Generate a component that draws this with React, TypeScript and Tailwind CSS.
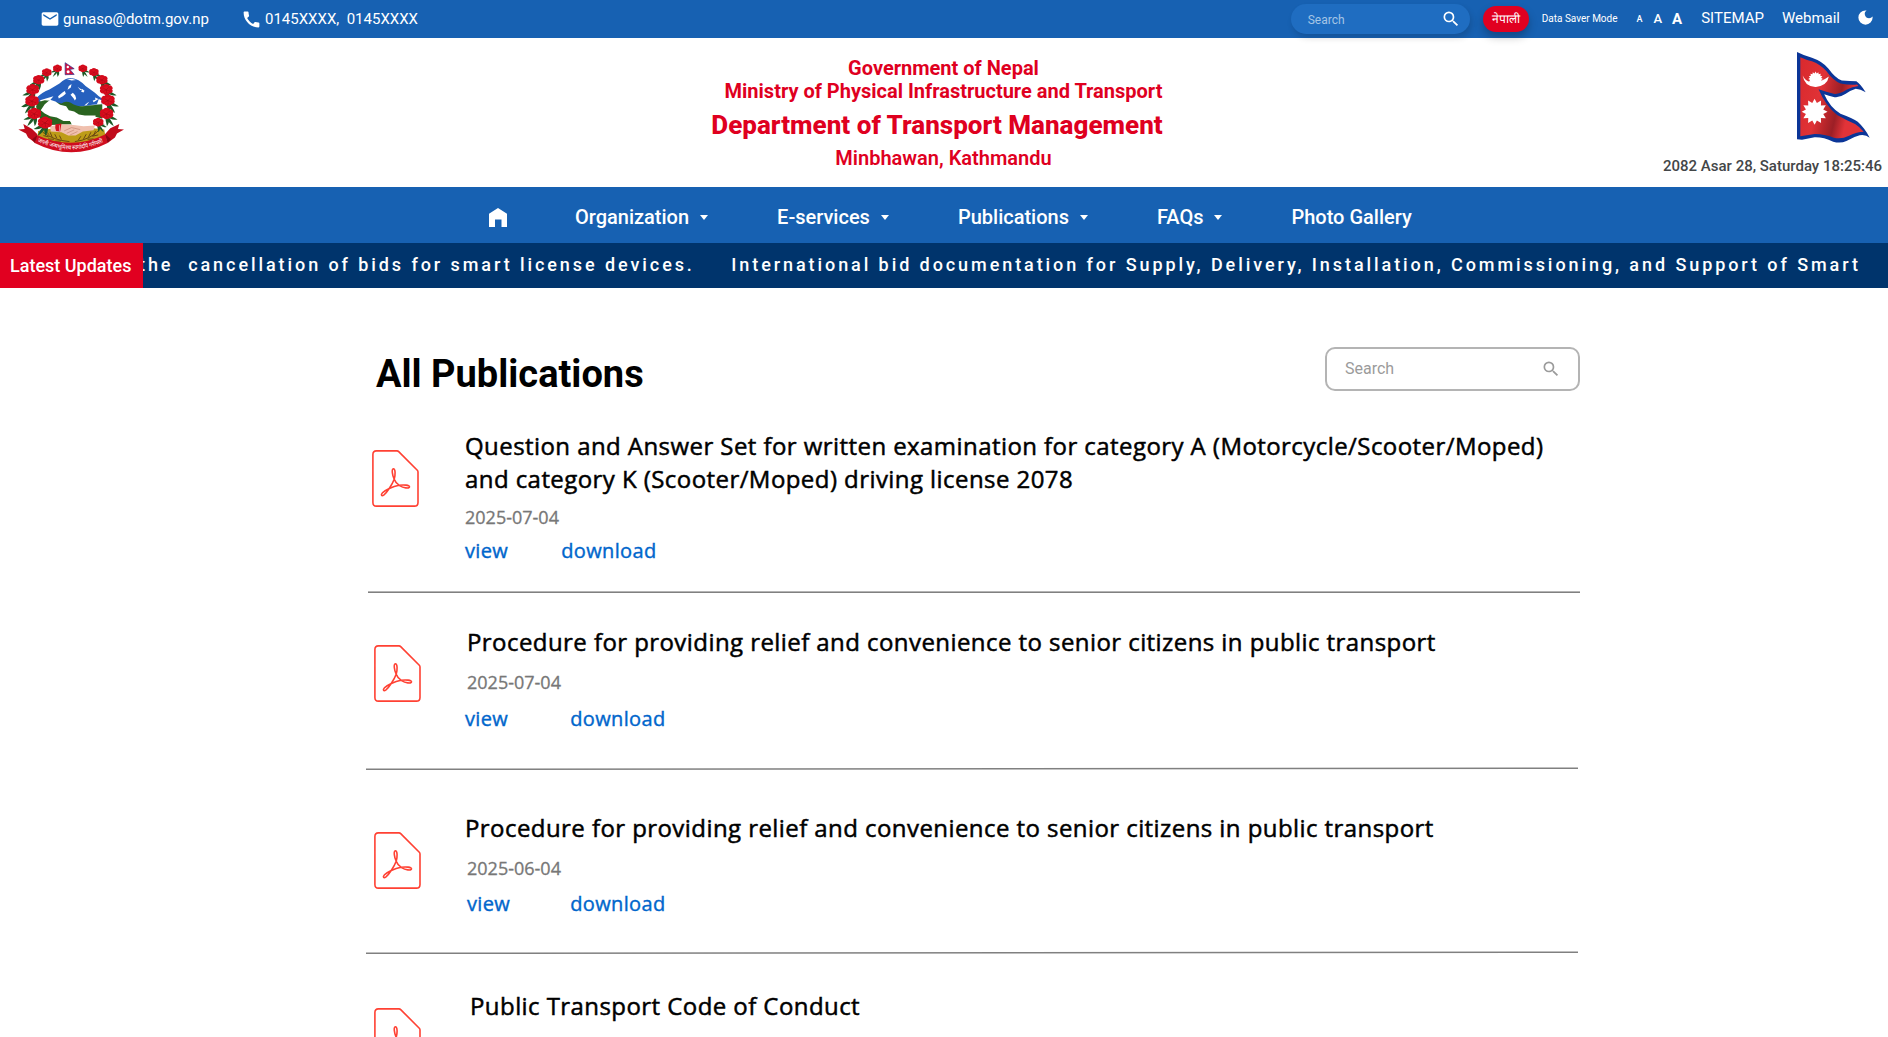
import React from "react";
import { MdEmail, MdCall, MdSearch, MdDarkMode } from "react-icons/md";

/* ---------- drawings ---------- */

const blossoms: [number, number, number][] = [
  [172, 205, 12], [140, 217, 13], [116, 239, 15], [98, 268, 17], [96, 302, 18], [103, 340, 18], [135, 367, 19],
  [248, 205, 12], [281, 216, 13], [305, 239, 15], [318, 268, 17], [323, 300, 18], [319, 340, 18], [294, 366, 14],
];

function Blossom({ x, y, r }: { x: number; y: number; r: number }) {
  const out = x < 212 ? -1 : 1;
  const petals = [0, 60, 120, 180, 240, 300];
  return (
    <g transform={`translate(${x} ${y}) scale(${r / 16})`}>
      <g fill="#1c5a26">
        <path d={`M0 2 Q${out * 16} 6 ${out * 29} 16 Q${out * 12} 20 0 6z`} />
        <path d={`M0 4 Q${out * 14} 18 ${out * 19} 34 Q${out * 3} 24 ${out * -3} 8z`} />
        <path d="M-4 6 Q-3 20 1 34 Q10 20 6 6z" />
      </g>
      {petals.map((a) => (
        <circle key={a} cx="0" cy="-9" r="8" fill="#d40a1c" transform={`scale(1.12 0.9) rotate(${a})`} />
      ))}
      <circle r="9" fill="#d9101f" />
      <path d="M-8 -3 L0 1 L7 -6 M0 1 L1 10 M-9 6 L0 1 L10 5" stroke="#a00614" strokeWidth="1.4" fill="none" />
    </g>
  );
}

function Emblem() {
  return (
    <svg viewBox="54 186 320 272" className="h-[91px] w-[107px]" role="img" aria-label="Emblem of Nepal">
      <path d="M114 392 Q212 372 312 388 L316 412 Q214 450 112 414z" fill="#bd9c17" />
      <path d="M212 234 Q196 234 178 250 L148 268 Q126 276 108 294 L112 306 L150 304 L200 322 L250 318 L304 312 L306 296 Q294 288 284 278 L256 258 Q236 236 212 234z" fill="#2660be" />
      <g fill="#fff">
        <path d="M200 237 L214 236 L228 240 L214 241z" />
        <path d="M206 258 L214 252 L212 262 L202 269z" />
        <path d="M232 260 L240 266 L248 268 L240 270z" />
        <path d="M174 288 L186 278 L194 273 L197 281 L188 288 L176 295z" />
        <path d="M218 278 L225 285 L228 295 L224 301 L220 294 L211 284z" />
        <path d="M246 267 L253 272 L250 277 L243 275z" />
        <path d="M304 300 L284 292 L286 298 L262 308 L252 316 L304 312z" />
        <path d="M120 300 L140 294 L160 288 L150 300 L124 310z" />
      </g>
      <path d="M258 316 L268 304 L276 298 L280 306 L296 296 L290 312z" fill="#2660be" />
      <path d="M112 306 L134 300 L148 302 L184 310 Q196 300 212 308 Q228 320 248 318 L306 312 L306 356 L286 350 L200 350 L216 372 L150 374 L120 356 L108 320z" fill="#2a6420" />
      <path d="M134 312 L150 299 L166 304 L180 314 L198 318 L206 330 L222 334 L236 343 L254 346 L286 346 L284 360 L292 378 L264 380 L240 374 L214 372 L212 362 L190 362 L170 352 L150 348 L134 340 L122 330z" fill="#fff" />
      <path d="M150 378 L186 372 L220 374 L250 378 L284 376 L280 390 L248 394 L226 406 L204 406 L184 396 L152 394z" fill="#f0c0ae" />
      <path d="M192 392 L214 382 L240 388 M200 399 L222 389 M210 404 L232 394" stroke="#c88672" strokeWidth="2" fill="none" />
      <path d="M166 372 L184 370 L180 394 L168 392 Q164 382 166 372z" fill="#d3101f" />
      <path d="M178 375 L178 393" stroke="#fff" strokeWidth="1.5" />
      <g stroke="#5e3c12" strokeWidth="2.6" fill="none">
        <path d="M128 396 Q160 420 208 424 M136 392 l12 12 M150 396 l6 14 M164 402 l6 12 M178 406 l6 12 M130 406 l16 4 M144 416 l18 1 M164 423 l18 -1" />
        <path d="M296 390 Q270 418 224 424 M286 392 l-6 14 M272 396 l-8 16 M258 402 l-8 14 M242 408 l-8 12 M294 404 l-18 4 M280 416 l-18 1" />
      </g>
      {blossoms.map(([x, y, r]) => (
        <Blossom key={`${x}-${y}`} x={x} y={y} r={r} />
      ))}
      <path d="M55 388 L74 386 L70 371 L96 386 L112 402 L106 428 L84 412 L78 400z" fill="#c10b1b" />
      <path d="M371 388 L353 386 L357 371 L330 384 L314 402 L322 428 L344 412 L350 400z" fill="#c10b1b" />
      <path d="M110 404 Q214 452 316 402 L322 428 Q214 484 104 428z" fill="#cf0d1f" />
      <path d="M112 404 L104 428 L96 418z M315 402 L322 428 L332 416z" fill="#8b0712" />
      <path id="motto" d="M112 424 Q214 472 318 422" fill="none" />
      <text fill="#fff" fontSize="18" fontFamily='"Noto Sans", sans-serif'>
        <textPath href="#motto" textLength="204" lengthAdjust="spacingAndGlyphs">जननी जन्मभूमिश्च स्वर्गादपि गरीयसी</textPath>
      </text>
      <path d="M195 188 L222 206 L209 208 L222 223 L195 224z" fill="#d4123c" stroke="#2d2f8e" strokeWidth="2" />
      <circle cx="203" cy="201" r="3.5" fill="#fff" />
      <circle cx="204" cy="215" r="4.5" fill="#fff" />
    </svg>
  );
}

function starPoints(cx: number, cy: number, outer: number, inner: number, n: number) {
  return Array.from({ length: n * 2 }, (_, i) => {
    const a = (Math.PI * i) / n - Math.PI / 2;
    const r = i % 2 ? inner : outer;
    return `${(cx + r * Math.cos(a)).toFixed(1)},${(cy + r * Math.sin(a)).toFixed(1)}`;
  }).join(" ");
}

function Flag() {
  return (
    <svg viewBox="471 36 220 274" className="h-[91px] w-[73px]" role="img" aria-label="Flag of Nepal">
      <defs>
        <linearGradient id="cloth" x1="0" x2="1" y1="0.1" y2="0.4">
          <stop offset="0" stopColor="#d92a2e" />
          <stop offset="0.38" stopColor="#e03236" />
          <stop offset="0.55" stopColor="#b8262b" />
          <stop offset="0.68" stopColor="#9c1f26" />
          <stop offset="0.85" stopColor="#e23338" />
          <stop offset="1" stopColor="#e23338" />
        </linearGradient>
      </defs>
      <path
        d="M471 36 Q490 46 516 53 Q548 64 566 86 Q586 114 606 122 Q630 124 650 124 Q662 132 678 157 Q662 148 648 147 Q632 152 618 162 Q600 174 584 172 Q566 168 553 163 Q570 202 602 222 Q640 236 654 246 Q676 266 690 294 Q678 284 660 287 Q640 292 620 304 Q602 312 580 306 Q550 292 524 293 L486 300 L471 299z"
        fill="#0b3597"
      />
      <path
        d="M481 52 Q498 60 516 64 Q542 74 560 94 Q580 122 602 131 Q630 136 652 134 L656 138 Q638 140 620 150 Q600 164 582 162 Q560 156 536 148 Q556 196 592 226 Q616 240 646 253 Q660 262 672 276 Q652 276 628 288 Q604 300 582 294 Q550 282 524 283 L481 290z"
        fill="url(#cloth)"
      />
      <polygon points={starPoints(527, 117, 22, 17, 16)} fill="#fff" />
      <path d="M488 107 Q496 124 512 126 Q540 130 567 110 Q562 138 528 141 Q494 142 488 107z" fill="#fff" />
      <polygon points={starPoints(524, 216, 39, 27, 12)} fill="#fff" />
    </svg>
  );
}

function PdfIcon() {
  return (
    <svg viewBox="0 0 47 57" className="h-[57px] w-[47px] shrink-0" fill="none" stroke="#ff4133" strokeLinejoin="round" aria-hidden="true">
      <path strokeWidth="1.6" d="M4.3 .9 H25 Q26 .9 26.7 1.6 L45.3 20.2 Q46 20.9 46 22 V52.4 Q46 56.1 42.3 56.1 H4.3 Q.9 56.1 .9 52.4 V4.4 Q.9 .9 4.3 .9z" />
      <path strokeWidth="1.6" d="M22.2 29.2 C20.4 25.6 19.3 18.8 21.4 18.8 C23.6 18.8 23.4 25.4 22.2 29.2 C20.2 34.4 15.2 42.3 12 44.8 C9.6 46.5 8.4 45 10.5 42.8 C13 40.2 20.5 36.4 27 35.3 C31.5 34.6 37.6 35 37.5 36.9 C37.3 38.9 31.3 38 27.6 35.6 C25 34 23.1 31.6 22.2 29.2z" />
    </svg>
  );
}

function HomeIcon() {
  return (
    <svg viewBox="0 0 18 19" className="-mr-px h-[19px] w-[18px]" fill="#fff" aria-label="Home">
      <path d="M0 5.8 L9 0 L18 5.8 V19 H12.5 V11.6 H6 V19 H0z" />
    </svg>
  );
}

function Caret() {
  return (
    <svg viewBox="0 0 8 5" className="h-[5px] w-2" fill="#fff" aria-hidden="true">
      <path d="M0 0H8L4 5z" />
    </svg>
  );
}

/* A hairline that drops very slightly to the left. */
function SlantedRule() {
  return (
    <svg viewBox="0 0 1212 2" className="-ml-[2px] block h-[2px] w-[1212px] overflow-visible" aria-hidden="true">
      <line x1="0" y1="1.25" x2="1212" y2="0.25" stroke="#808080" strokeWidth="1.5" />
    </svg>
  );
}

/* ---------- page sections ---------- */

function TopBar() {
  return (
    <div className="flex h-[38px] items-start bg-[#1761b2] text-[15px] leading-[18px] text-white">
      <MdEmail className="mt-[9px] ml-10 size-5" />
      <span className="mt-[10px] ml-[3px]">gunaso@dotm.gov.np</span>
      <MdCall className="mt-[9px] ml-8 size-[21px]" />
      <span className="mt-[10px] ml-[3px] whitespace-pre">0145XXXX,  0145XXXX</span>

      <div className="relative z-10 mt-1 ml-auto flex h-[30px] w-[179px] items-center rounded-full bg-[#1f6dc1] pr-[9px] pl-[17px] shadow-[2px_4px_6px_rgba(0,0,0,0.14)]">
        <span className="mt-px flex-1 text-xs leading-4 text-[#a5c5e6]">Search</span>
        <MdSearch className="size-5" />
      </div>
      <button className="relative z-10 mt-[6px] ml-[13px] flex h-[26px] w-[46px] items-center justify-center rounded-full bg-[#e10020] text-[12px] leading-none shadow-[0_5px_8px_rgba(0,0,0,0.25)]">
        नेपाली
      </button>
      <span className="mt-[13px] ml-[13px] text-[10px] leading-3">Data Saver Mode</span>
      <span className="mt-[13px] ml-[19px] text-[9px] leading-3 font-medium">A</span>
      <span className="mt-[11px] ml-[11px] text-[13px] leading-4 font-medium">A</span>
      <span className="mt-[11px] ml-[10px] text-[15px] leading-4 font-bold">A</span>
      <span className="mt-[9px] ml-[19px]">SITEMAP</span>
      <span className="mt-[9px] ml-[18px]">Webmail</span>
      <MdDarkMode className="mt-[8px] mr-[13px] ml-[16px] size-[19px]" />
    </div>
  );
}

function Masthead() {
  return (
    <header className="grid h-[149px] grid-cols-[1fr_auto_1fr] items-start">
      <div className="pt-6 pl-[18px]">
        <Emblem />
      </div>
      <div className="flex flex-col items-center pt-[19px] text-xl leading-[23px] font-bold text-[#df001f]">
        <p className="mr-px">Government of Nepal</p>
        <p className="mr-px">Ministry of Physical Infrastructure and Transport</p>
        <h1 className="mt-[7px] mr-[14px] text-[26px] leading-[30px] font-extrabold tracking-[0.02px]">Department of Transport Management</h1>
        <p className="mt-[7px] mr-px font-semibold">Minbhawan, Kathmandu</p>
      </div>
      <div className="flex flex-col items-end pt-[14px]">
        <div className="mr-[18px]">
          <Flag />
        </div>
        <p className="mt-[14px] mr-[6px] text-[15px] leading-[18px] font-medium text-[#434648]">2082 Asar 28, Saturday 18:25:46</p>
      </div>
    </header>
  );
}

const menu = ["Organization", "E-services", "Publications", "FAQs"];

function Nav() {
  return (
    <nav className="flex h-14 items-center gap-[69px] bg-[#1761b2] pt-1 pl-[489px] text-xl leading-6 font-medium text-white">
      <HomeIcon />
      {menu.map((m) => (
        <a key={m} className="flex items-center gap-[11px]">
          {m}
          <Caret />
        </a>
      ))}
      <a>Photo Gallery</a>
    </nav>
  );
}

function Ticker() {
  return (
    <div className="flex h-[45px] bg-[#00346c] text-lg leading-6 font-medium text-white">
      <div className="flex w-[143px] shrink-0 items-center bg-[#e10020] pl-[10px] whitespace-nowrap">Latest Updates</div>
      <div className="flex min-w-0 flex-1 overflow-hidden pt-[10px] tracking-[2.92px] whitespace-pre">
        <span className="-ml-1">the  cancellation of bids for smart license devices.</span>
        <span className="ml-[36.5px]">International bid documentation for Supply, Delivery, Installation, Commissioning, and Support of Smart</span>
      </div>
    </div>
  );
}

type Item = {
  title: string;
  date?: string;
  box: string;
  icon: string;
  text: string;
  dateCls?: string;
  links?: string;
  second?: string;
  slanted?: boolean;
};

const items: Item[] = [
  {
    title: "Question and Answer Set for written examination for category A (Motorcycle/Scooter/Moped)\nand category K (Scooter/Moped) driving license 2078",
    date: "2025-07-04",
    box: "h-[162px]",
    icon: "mt-[21px] ml-1",
    text: "ml-[46px]",
    dateCls: "mt-[10px]",
    links: "mt-2",
    second: "ml-[53px]",
  },
  {
    title: "Procedure for providing relief and convenience to senior citizens in public transport",
    date: "2025-07-04",
    box: "mt-8 h-[143px]",
    icon: "mt-5 ml-[6px]",
    text: "ml-[46px]",
    dateCls: "mt-3",
    links: "mt-[11px] -ml-[2px]",
    second: "ml-[62px]",
    slanted: true,
  },
  {
    title: "Procedure for providing relief and convenience to senior citizens in public transport",
    date: "2025-06-04",
    box: "mt-[41px] h-[141px]",
    icon: "mt-[21px] ml-[6px]",
    text: "ml-[44px]",
    dateCls: "mt-3 ml-[2px]",
    links: "mt-[10px] ml-[2px]",
    second: "ml-[60px]",
    slanted: true,
  },
  {
    title: "Public Transport Code of Conduct",
    box: "mt-[35px] h-[141px]",
    icon: "mt-[19px] ml-[6px]",
    text: "ml-[49px]",
  },
];

function Publication({ item }: { item: Item }) {
  return (
    <article>
      <div className={`flex items-start ${item.box}`}>
        <div className={item.icon}>
          <PdfIcon />
        </div>
        <div className={`font-[Open_Sans,Noto_Sans,sans-serif] font-medium ${item.text}`}>
          <h3 className="text-2xl leading-[33px] tracking-[0.43px] whitespace-pre text-black [-webkit-text-stroke:0.5px_currentColor]">{item.title}</h3>
          {item.date && (
            <>
              <p className={`text-lg leading-6 text-[#777] [-webkit-text-stroke:0.3px_currentColor] ${item.dateCls}`}>{item.date}</p>
              <div className={`flex text-xl leading-[27px] tracking-[0.36px] text-[#0066cc] [-webkit-text-stroke:0.4px_currentColor] ${item.links}`}>
                <a>view</a>
                <a className={item.second}>download</a>
              </div>
            </>
          )}
        </div>
      </div>
      {item.slanted ? <SlantedRule /> : <div className="h-[2px] bg-linear-to-b from-[#b4b4b4] from-50% to-[#808080] to-50%" />}
    </article>
  );
}

export default function App() {
  return (
    <div className="h-[1037px] w-[1888px] overflow-hidden bg-white font-[Roboto,sans-serif]">
      <TopBar />
      <Masthead />
      <Nav />
      <Ticker />
      <main className="ml-[368px] w-[1212px]">
        <div className="flex h-[141px] items-start justify-between">
          <h2 className="mt-[63px] ml-2 text-[38px] leading-[46px] font-bold text-black">All Publications</h2>
          <div className="mt-[59px] flex h-[44px] w-[255px] items-center rounded-[10px] border-2 border-[#b4b4b4] pr-[17px] pl-[18px] text-base leading-5 text-[#9b9b9b]">
            <span className="flex-1">Search</span>
            <MdSearch className="size-5" />
          </div>
        </div>
        {items.map((item, i) => (
          <Publication key={i} item={item} />
        ))}
      </main>
    </div>
  );
}
